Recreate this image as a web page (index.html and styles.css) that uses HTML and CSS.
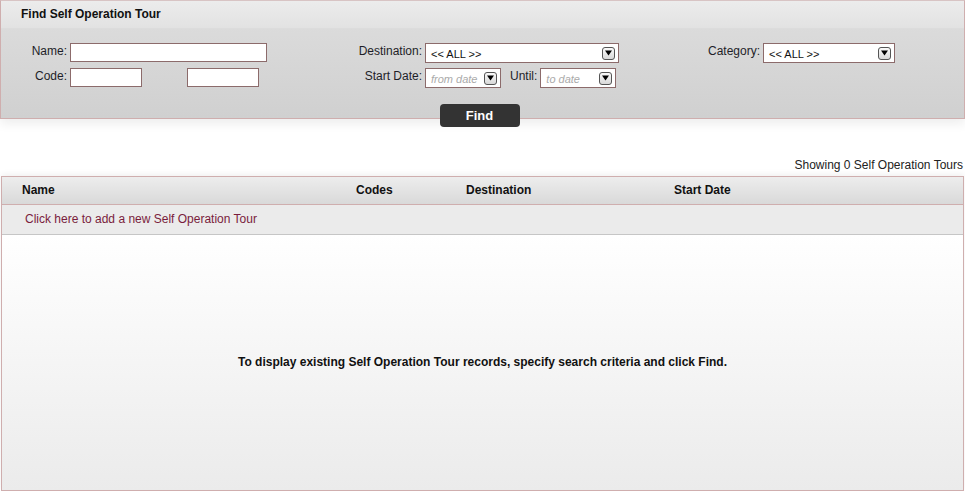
FILE: index.html
```html
<!DOCTYPE html>
<html>
<head>
<meta charset="utf-8">
<link rel="stylesheet" href="styles.css">
</head>
<body>
<div class="search">
  <div class="search-head">Find Self Operation Tour</div>
  <div class="search-body">
    <div class="group g1">
      <label class="lbl">Name:</label>
      <div class="fields"><span class="input w-name"></span></div>
      <label class="lbl">Code:</label>
      <div class="fields"><span class="input w-code"></span><span class="input w-code gap-code"></span></div>
    </div>
    <div class="group g2">
      <label class="lbl">Destination:</label>
      <div class="fields"><span class="select w-dest"><span class="sel-text">&lt;&lt; ALL &gt;&gt;</span><span class="arrow"><svg width="7" height="6" viewBox="0 0 7 6"><path d="M0 0.5H7L3.5 5.5Z" fill="#000"/></svg></span></span></div>
      <label class="lbl">Start Date:</label>
      <div class="fields">
        <span class="select w-date"><span class="sel-text ph">from date</span><span class="arrow"><svg width="7" height="6" viewBox="0 0 7 6"><path d="M0 0.5H7L3.5 5.5Z" fill="#000"/></svg></span></span>
        <label class="lbl until">Until:</label>
        <span class="select w-date"><span class="sel-text ph">to date</span><span class="arrow"><svg width="7" height="6" viewBox="0 0 7 6"><path d="M0 0.5H7L3.5 5.5Z" fill="#000"/></svg></span></span>
      </div>
    </div>
    <div class="group g3">
      <label class="lbl">Category:</label>
      <div class="fields"><span class="select w-cat"><span class="sel-text">&lt;&lt; ALL &gt;&gt;</span><span class="arrow"><svg width="7" height="6" viewBox="0 0 7 6"><path d="M0 0.5H7L3.5 5.5Z" fill="#000"/></svg></span></span></div>
    </div>
  </div>
  <div class="btn-row"><button class="find">Find</button></div>
</div>

<div class="showing">Showing 0 Self Operation Tours</div>

<div class="grid">
  <div class="grid-head">
    <span class="col c-name">Name</span>
    <span class="col c-codes">Codes</span>
    <span class="col c-dest">Destination</span>
    <span class="col c-date">Start Date</span>
  </div>
  <div class="add-row"><a class="add-link">Click here to add a new Self Operation Tour</a></div>
  <div class="grid-body">To display existing Self Operation Tour records, specify search criteria and click Find.</div>
</div>
</body>
</html>
```

FILE: styles.css
```css
html, body {
  margin: 0;
  padding: 0;
  background: #fff;
}
body {
  font-family: "Liberation Sans", Arial, sans-serif;
  font-size: 12px;
  color: #222;
  width: 965px;
  height: 491px;
  overflow: hidden;
}
.search {
  border: 1px solid #cfaeae;
  border-top-color: #d8c4c4;
  height: 119px;
  box-sizing: border-box;
  background: linear-gradient(#dedede, #d0d0d0);
  box-shadow: 0 5px 10px rgba(0,0,0,0.07);
  position: relative;
}
.search-head {
  height: 27px;
  line-height: 27px;
  padding-left: 20px;
  font-weight: bold;
  color: #111;
  background: linear-gradient(#ececec, #e2e2e2);
  border-bottom: 1px solid #dcdcdc;
}
.search-body {
  display: flex;
  padding-top: 14px;
}
.group {
  display: grid;
  column-gap: 3px;
  row-gap: 5px;
  align-content: start;
  align-items: start;
}
.g1 { width: 330px; grid-template-columns: 66px auto; }
.g2 { width: 370px; grid-template-columns: 91px auto; }
.g3 { grid-template-columns: 59px auto; }
.lbl {
  text-align: right;
  line-height: 14px;
  padding-top: 1px;
  color: #1e1e28;
}
.fields {
  display: flex;
  align-items: flex-start;
  height: 20px;
}
.input {
  display: block;
  height: 19px;
  box-sizing: border-box;
  border: 1px solid #8c6b6b;
  background: #fff;
}
.w-name { width: 197px; }
.w-code { width: 72px; }
.gap-code { margin-left: 45px; }
.select {
  display: flex;
  align-items: center;
  justify-content: space-between;
  height: 20px;
  box-sizing: border-box;
  border: 1px solid #8c6b6b;
  background: #fff;
  padding: 0 3px 0 5px;
}
.w-dest { width: 194px; }
.w-date { width: 76px; }
.w-cat { width: 132px; }
.sel-text {
  font-size: 11px;
  color: #111;
  padding-top: 2px;
}
.sel-text.ph {
  color: #aaa;
  font-style: italic;
}
.arrow {
  width: 13px;
  height: 13px;
  box-sizing: border-box;
  border: 1px solid #555;
  border-radius: 3px;
  background: linear-gradient(#fafafa, #d8d8d8);
  display: flex;
  align-items: center;
  justify-content: center;
}
.until {
  margin: 0 3px 0 9px;
}
.btn-row {
  display: flex;
  justify-content: center;
  padding-right: 6px;
  margin-top: 16px;
}
.find {
  width: 80px;
  height: 23px;
  border: 0;
  border-radius: 4px;
  background: #333;
  color: #fff;
  font-family: "Liberation Sans", Arial, sans-serif;
  font-weight: bold;
  font-size: 13px;
  padding: 0;
  position: relative;
  z-index: 1;
}
.showing {
  text-align: right;
  padding-right: 2px;
  margin-top: 39px;
  line-height: 14px;
  color: #222;
}
.grid {
  margin: 4px 1px 0;
  border: 1px solid #cfaeae;
  height: 315px;
  box-sizing: border-box;
  display: flex;
  flex-direction: column;
  box-shadow: 0 -2px 6px rgba(0,0,0,0.06);
}
.grid-head {
  display: flex;
  height: 27px;
  line-height: 27px;
  border-bottom: 1px solid #cfaeae;
  background: linear-gradient(#ededed, #d9d9d9);
  font-weight: bold;
  color: #111;
  flex-shrink: 0;
}
.col { display: block; }
.c-name { padding-left: 20px; width: 334px; }
.c-codes { width: 110px; }
.c-dest { width: 208px; }
.add-row {
  height: 29px;
  line-height: 29px;
  background: #ebebeb;
  border-bottom: 1px solid #c6c6c6;
  padding-left: 23px;
  flex-shrink: 0;
}
.add-link {
  color: #7a1d3c;
}
.grid-body {
  flex: 1;
  display: flex;
  align-items: center;
  justify-content: center;
  font-weight: bold;
  color: #111;
  background: linear-gradient(#ffffff, #ebebeb);
  padding-bottom: 2px;
}
```
